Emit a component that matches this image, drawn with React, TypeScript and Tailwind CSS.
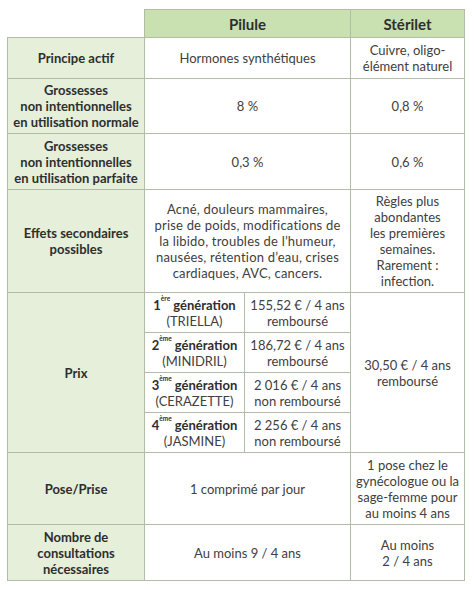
const border = "border border-[#b3bca6]";
const head = `${border} bg-[#e5efd9] font-bold text-[#2e2e2e] text-center align-middle px-0 whitespace-nowrap`;
const cell = `${border} bg-white text-center align-middle px-0 whitespace-nowrap`;

const gens = [
  { n: "1", sup: "ère", name: "(TRIELLA)", price: "155,52 € / 4 ans", rb: "remboursé" },
  { n: "2", sup: "ème", name: "(MINIDRIL)", price: "186,72 € / 4 ans", rb: "remboursé" },
  { n: "3", sup: "ème", name: "(CERAZETTE)", price: "2 016 € / 4 ans", rb: "non remboursé" },
  { n: "4", sup: "ème", name: "(JASMINE)", price: "2 256 € / 4 ans", rb: "non remboursé" },
];

export default function App() {
  return (
    <div
      className="w-[474px] h-[590px] bg-white pt-[9px] pl-[7px] text-[13px] leading-[16px] text-[#404040]"
      style={{ fontFamily: "Lato, 'Open Sans', sans-serif" }}
    >
      <table className="border-collapse table-fixed w-[457px]">
        <colgroup>
          <col className="w-[137px]" />
          <col className="w-[100px]" />
          <col className="w-[106px]" />
          <col className="w-[114px]" />
        </colgroup>
        <tbody>
          <tr className="h-[28px]">
            <td />
            <td colSpan={2} className={`${border} bg-[#c9e0b1] font-bold text-[15px] text-[#2e2e2e] text-center`}>
              Pilule
            </td>
            <td className={`${border} bg-[#c9e0b1] font-bold text-[15px] text-[#2e2e2e] text-center`}>
              Stérilet
            </td>
          </tr>
          <tr className="h-[41px]">
            <td className={head}>Principe actif</td>
            <td colSpan={2} className={cell}>Hormones synthétiques</td>
            <td className={cell}>
              Cuivre, oligo-
              <br />
              élément naturel
            </td>
          </tr>
          <tr className="h-[55px]">
            <td className={head}>
              Grossesses
              <br />
              non intentionnelles
              <br />
              en utilisation normale
            </td>
            <td colSpan={2} className={cell}>8 %</td>
            <td className={cell}>0,8 %</td>
          </tr>
          <tr className="h-[56px]">
            <td className={head}>
              Grossesses
              <br />
              non intentionnelles
              <br />
              en utilisation parfaite
            </td>
            <td colSpan={2} className={cell}>0,3 %</td>
            <td className={cell}>0,6 %</td>
          </tr>
          <tr className="h-[103px]">
            <td className={head}>
              Effets secondaires
              <br />
              possibles
            </td>
            <td colSpan={2} className={`${cell} tracking-[0.2px]`}>
              Acné, douleurs mammaires,
              <br />
              prise de poids, modifications de
              <br />
              la libido, troubles de l’humeur,
              <br />
              nausées, rétention d’eau, crises
              <br />
              cardiaques, AVC, cancers.
            </td>
            <td className={cell}>
              Règles plus
              <br />
              abondantes
              <br />
              les premières
              <br />
              semaines.
              <br />
              Rarement :
              <br />
              infection.
            </td>
          </tr>
          {gens.map((g, i) => (
            <tr key={i} className="h-[40px]">
              {i === 0 && (
                <td rowSpan={4} className={head}>
                  Prix
                </td>
              )}
              <td className={cell}>
                <span className="font-bold text-[#2e2e2e]">
                  {g.n}
                  <sup className="text-[6.5px] align-[5px]">{g.sup}</sup> génération
                </span>
                <br />
                {g.name}
              </td>
              <td className={cell}>
                {g.price}
                <br />
                {g.rb}
              </td>
              {i === 0 && (
                <td rowSpan={4} className={cell}>
                  30,50 € / 4 ans
                  <br />
                  remboursé
                </td>
              )}
            </tr>
          ))}
          <tr className="h-[72px]">
            <td className={head}>Pose/Prise</td>
            <td colSpan={2} className={cell}>1 comprimé par jour</td>
            <td className={cell}>
              1 pose chez le
              <br />
              gynécologue ou la
              <br />
              sage-femme pour
              <br />
              au moins 4 ans
            </td>
          </tr>
          <tr className="h-[56px]">
            <td className={head}>
              Nombre de
              <br />
              consultations
              <br />
              nécessaires
            </td>
            <td colSpan={2} className={cell}>Au moins 9 / 4 ans</td>
            <td className={cell}>
              Au moins
              <br />2 / 4 ans
            </td>
          </tr>
        </tbody>
      </table>
    </div>
  );
}
